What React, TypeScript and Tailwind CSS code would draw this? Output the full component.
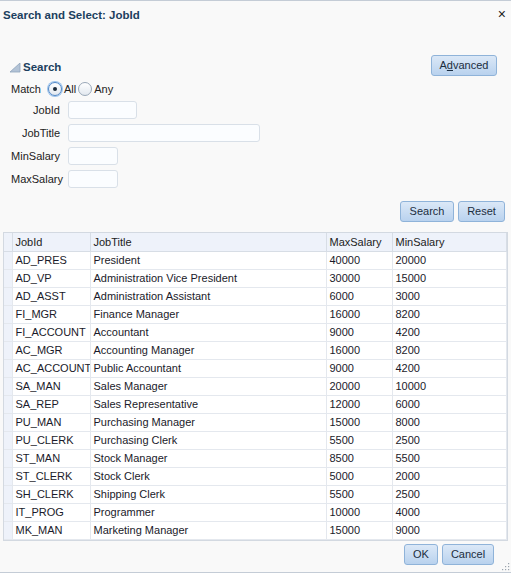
import { useState } from 'react';

const rows = [
  ['AD_PRES', 'President', '40000', '20000'],
  ['AD_VP', 'Administration Vice President', '30000', '15000'],
  ['AD_ASST', 'Administration Assistant', '6000', '3000'],
  ['FI_MGR', 'Finance Manager', '16000', '8200'],
  ['FI_ACCOUNT', 'Accountant', '9000', '4200'],
  ['AC_MGR', 'Accounting Manager', '16000', '8200'],
  ['AC_ACCOUNT', 'Public Accountant', '9000', '4200'],
  ['SA_MAN', 'Sales Manager', '20000', '10000'],
  ['SA_REP', 'Sales Representative', '12000', '6000'],
  ['PU_MAN', 'Purchasing Manager', '15000', '8000'],
  ['PU_CLERK', 'Purchasing Clerk', '5500', '2500'],
  ['ST_MAN', 'Stock Manager', '8500', '5500'],
  ['ST_CLERK', 'Stock Clerk', '5000', '2000'],
  ['SH_CLERK', 'Shipping Clerk', '5500', '2500'],
  ['IT_PROG', 'Programmer', '10000', '4000'],
  ['MK_MAN', 'Marketing Manager', '15000', '9000'],
];

const fields = [
  { label: 'JobId', w: 'w-[69px]' },
  { label: 'JobTitle', w: 'w-[192px]' },
  { label: 'MinSalary', w: 'w-[50px]' },
  { label: 'MaxSalary', w: 'w-[50px]' },
];

function Btn({ children, className = '' }: { children: React.ReactNode; className?: string }) {
  return (
    <button
      className={`h-[21px] rounded-[3px] border border-[#8fb3d9] bg-gradient-to-b from-[#dbe8f7] to-[#b9d2ee] px-0 text-[11px] leading-none text-[#1b2d40] ${className}`}
    >
      {children}
    </button>
  );
}

function Radio({ checked }: { checked?: boolean }) {
  return (
    <span
      className={`flex h-[14px] w-[14px] items-center justify-center rounded-full border bg-gradient-to-b from-[#ffffff] to-[#e2e8ef] ${
        checked ? 'border-[#4f86c6] shadow-[0_0_0_1px_#9cc3ec]' : 'border-[#9aa8b8]'
      }`}
    >
      {checked && <span className="h-[4px] w-[4px] rounded-full bg-[#1b2a3a]" />}
    </span>
  );
}

export default function App() {
  const [match, setMatch] = useState<'all' | 'any'>('all');

  return (
    <div
      className="flex h-[573px] w-[511px] flex-col border-t border-b border-[#c4ccd6] bg-[#f9f9f9] text-[11px] text-[#222]"
      style={{ fontFamily: '"Liberation Sans", Arial, sans-serif' }}
    >
      {/* title bar */}
      <div className="flex h-[28px] items-start justify-between pl-[3px] pr-[5px] pt-[6px]">
        <span className="text-[11.5px] font-bold text-[#1c3f5e]">Search and Select: JobId</span>
        <span className="text-[14px] leading-none text-[#222]">×</span>
      </div>

      {/* search panel */}
      <div className="mt-[26px] flex items-start justify-between pl-[9px] pr-[14px]">
        <div className="flex items-center gap-[2px] pt-[4px]">
          <svg width="12" height="10" viewBox="0 0 12 10">
            <polygon points="11,0 11,9 1,9" fill="#b3c3d6" stroke="#8fa5bd" strokeWidth="0.8" />
          </svg>
          <span className="text-[11.5px] font-bold text-[#1c3f5e]">Search</span>
        </div>
        <Btn className="w-[66px]">
          A<span className="underline">d</span>vanced
        </Btn>
      </div>

      <div className="mt-[2px] flex flex-col pl-[11px]">
        <div className="flex h-[22px] items-center gap-[7px]">
          <span>Match</span>
          <div className="flex items-center gap-[2px]">
            <label className="flex items-center gap-[2px]" onClick={() => setMatch('all')}>
              <Radio checked={match === 'all'} />
              <span>All</span>
            </label>
            <label className="flex items-center gap-[2px]" onClick={() => setMatch('any')}>
              <Radio checked={match === 'any'} />
              <span>Any</span>
            </label>
          </div>
        </div>
        <div className="mt-[1px] flex flex-col gap-[5px]">
          {fields.map((f) => (
            <div key={f.label} className="flex h-[18px] items-center">
              <span className="w-[49px] text-right">{f.label}</span>
              <input className={`ml-[8px] h-[18px] rounded-[3px] border border-[#d9e0e8] bg-[#fbfdff] ${f.w}`} />
            </div>
          ))}
        </div>
      </div>

      <div className="mt-[13px] flex justify-end gap-[4px] pr-[6px]">
        <Btn className="w-[54px]">Search</Btn>
        <Btn className="w-[47px]">Reset</Btn>
      </div>

      {/* results table */}
      <div className="mx-[3px] mt-[10px] h-[309px] overflow-hidden border border-[#d3d9e1] bg-white">
        <table className="w-full table-fixed border-collapse">
          <colgroup>
            <col className="w-[8px]" />
            <col className="w-[78px]" />
            <col className="w-[236px]" />
            <col className="w-[66px]" />
            <col />
          </colgroup>
          <thead>
            <tr className="h-[18px] bg-[#eef2fa] text-left">
              <th className="border-b border-r border-[#d7dde5] p-0" />
              {['JobId', 'JobTitle', 'MaxSalary', 'MinSalary'].map((h) => (
                <th key={h} className="border-b border-r border-[#d7dde5] px-[3px] py-0 font-normal leading-[17px]">
                  {h}
                </th>
              ))}
            </tr>
          </thead>
          <tbody>
            {rows.map((r) => (
              <tr key={r[0]} className="h-[17px]">
                <td className="border-b border-r border-[#e4e8ee] bg-[#eef2fa] p-0" />
                {r.map((c, i) => (
                  <td
                    key={i}
                    className="overflow-hidden whitespace-nowrap border-b border-r border-[#e4e8ee] px-[3px] py-0 leading-[17px] text-[#1a1a2a]"
                  >
                    {c}
                  </td>
                ))}
              </tr>
            ))}
            <tr className="h-[17px]">
              <td className="border-r border-[#e4e8ee] bg-[#eef2fa] p-0" />
              <td className="border-r border-[#e4e8ee]" />
              <td className="border-r border-[#e4e8ee]" />
              <td className="border-r border-[#e4e8ee]" />
              <td className="border-r border-[#e4e8ee]" />
            </tr>
          </tbody>
        </table>
      </div>

      <div className="relative mt-[3px] flex justify-end gap-[4px] pr-[17px]">
        <Btn className="w-[34px]">OK</Btn>
        <Btn className="w-[52px]">Cancel</Btn>
        <svg className="absolute bottom-[-6px] right-[1px]" width="9" height="9" viewBox="0 0 9 9">
          {[
            [7, 1], [7, 4], [4, 4], [7, 7], [4, 7], [1, 7],
          ].map(([x, y]) => (
            <rect key={`${x}-${y}`} x={x} y={y} width="1.2" height="1.2" fill="#9aa3ad" />
          ))}
        </svg>
      </div>
    </div>
  );
}
